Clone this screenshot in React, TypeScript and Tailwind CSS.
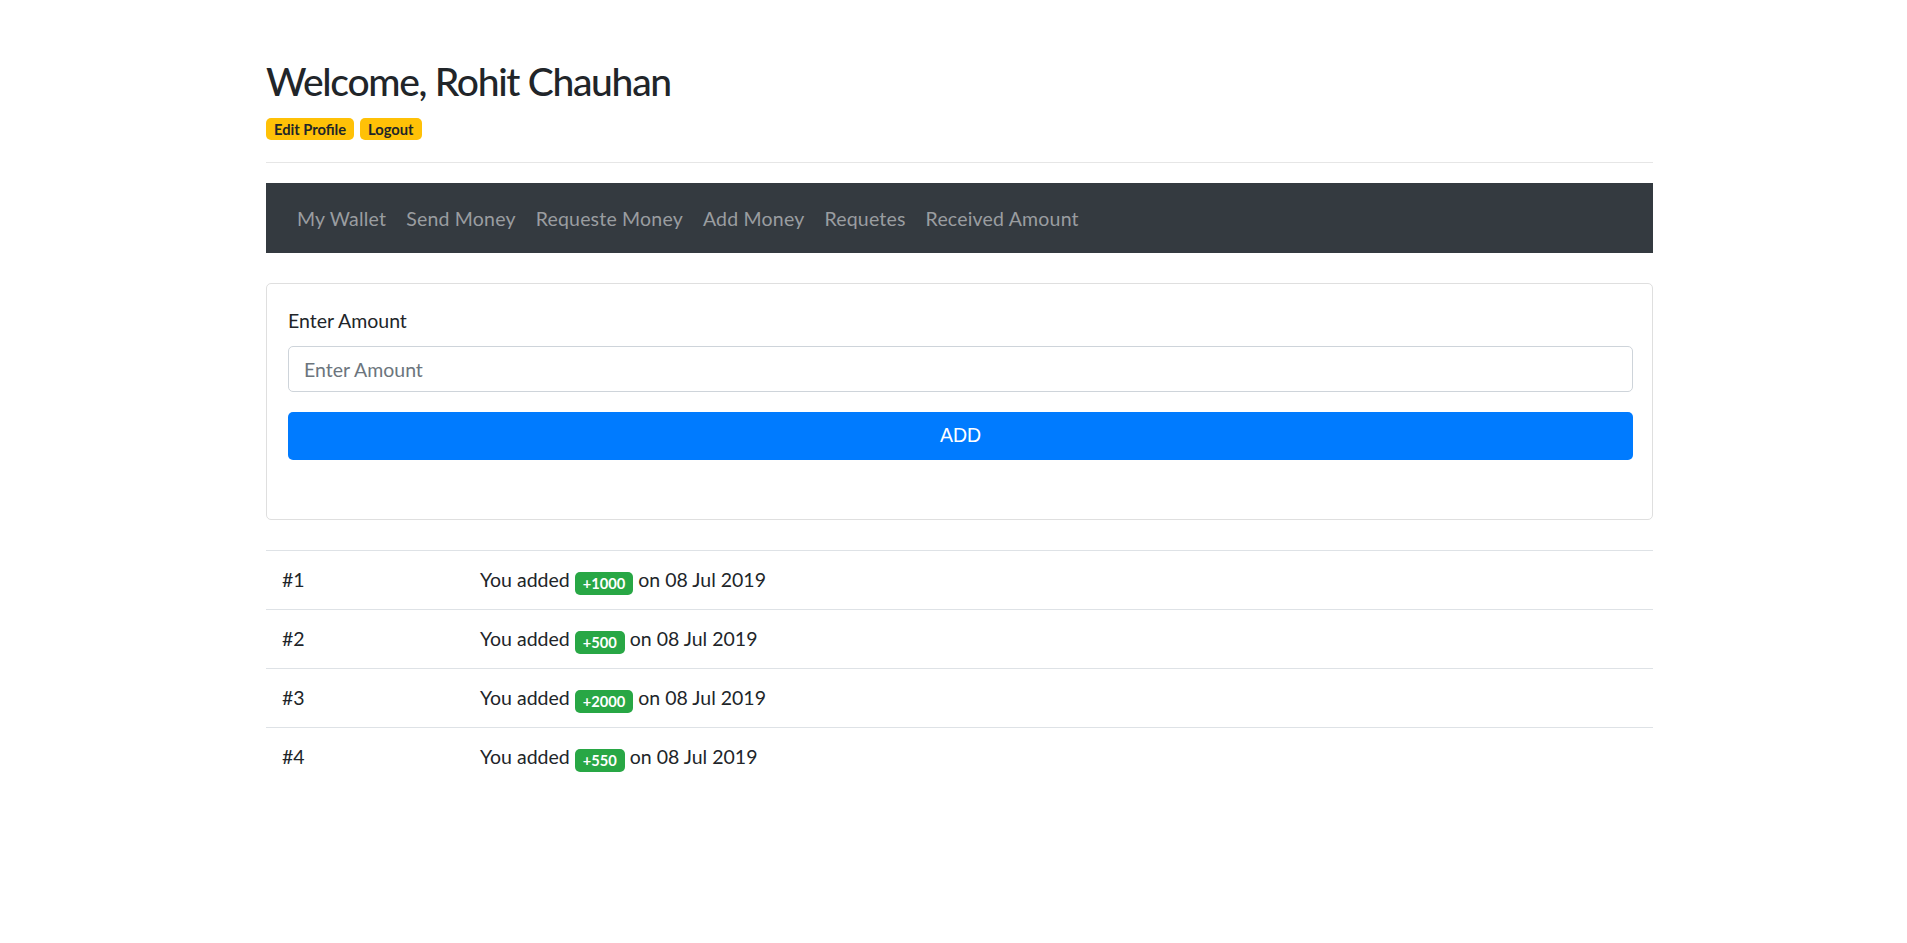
import React from 'react';

const navItems = ['My Wallet', 'Send Money', 'Requeste Money', 'Add Money', 'Requetes', 'Received Amount'];

const transactions = [
  { id: 1, amount: 1000, date: '08 Jul 2019' },
  { id: 2, amount: 500, date: '08 Jul 2019' },
  { id: 3, amount: 2000, date: '08 Jul 2019' },
  { id: 4, amount: 550, date: '08 Jul 2019' },
];

export default function App() {
  return (
    <div className="min-h-screen bg-white pl-[266px] pt-[58px] text-[#212529] font-['Lato','Noto_Sans',sans-serif]">
      <div className="w-[1387px]">
        {/* Header */}
        <h2 className="h-[47px] text-[39px] leading-[47px] font-medium tracking-[-1.3px]">Welcome, Rohit Chauhan</h2>
        <div className="mt-[13px] flex gap-[6px]">
          <span className="h-[22px] rounded-[5px] bg-[#ffc107] px-[8px] text-[14.7px] leading-[22px] font-bold text-[#212529]">Edit Profile</span>
          <span className="h-[22px] rounded-[5px] bg-[#ffc107] px-[8px] text-[14.7px] leading-[22px] font-bold text-[#212529]">Logout</span>
        </div>
        <hr className="mt-[22px] border-0 border-t border-[#e6e6e6]" />

        {/* Navbar */}
        <nav className="mt-[20px] flex h-[70px] items-center bg-[#343a40] pl-[21px]">
          {navItems.map(item => (
            <a key={item} href="#" className="px-[10px] text-[19.5px] leading-[29px] tracking-[0.2px] text-[#9a9da0] hover:text-[#c2c4c6]">
              {item}
            </a>
          ))}
        </nav>

        {/* Add money form */}
        <div className="mt-[30px] rounded-[5px] border border-[#dfdfdf] pl-[21px] pr-[19px] pt-[22px] pb-[59px]">
          <label className="block h-[29px] text-[19.5px] leading-[29px]">Enter Amount</label>
          <input
            type="text"
            placeholder="Enter Amount"
            className="mt-[11px] block h-[46px] w-full rounded-[5px] border border-[#ced4da] px-[15px] text-[19.5px] text-[#495057] placeholder:text-[#6c757d] outline-none"
          />
          <button className="mt-[20px] block h-[48px] w-full rounded-[5px] bg-[#007bff] text-[19.5px] text-white font-['Liberation_Sans',sans-serif]">
            ADD
          </button>
        </div>

        {/* Transactions */}
        <div className="mt-[30px]">
          {transactions.map(t => (
            <div key={t.id} className="flex h-[59px] items-center border-t border-[#dee2e6] text-[19.5px]">
              <div className="w-[214px] pl-[16px]">#{t.id}</div>
              <div>
                You added{' '}
                <span className="inline-block h-[23px] rounded-[5px] bg-[#28a745] px-[8px] align-[-2px] text-[14.7px] leading-[23px] font-bold text-white">
                  +{t.amount}
                </span>{' '}
                on {t.date}
              </div>
            </div>
          ))}
        </div>
      </div>
    </div>
  );
}
